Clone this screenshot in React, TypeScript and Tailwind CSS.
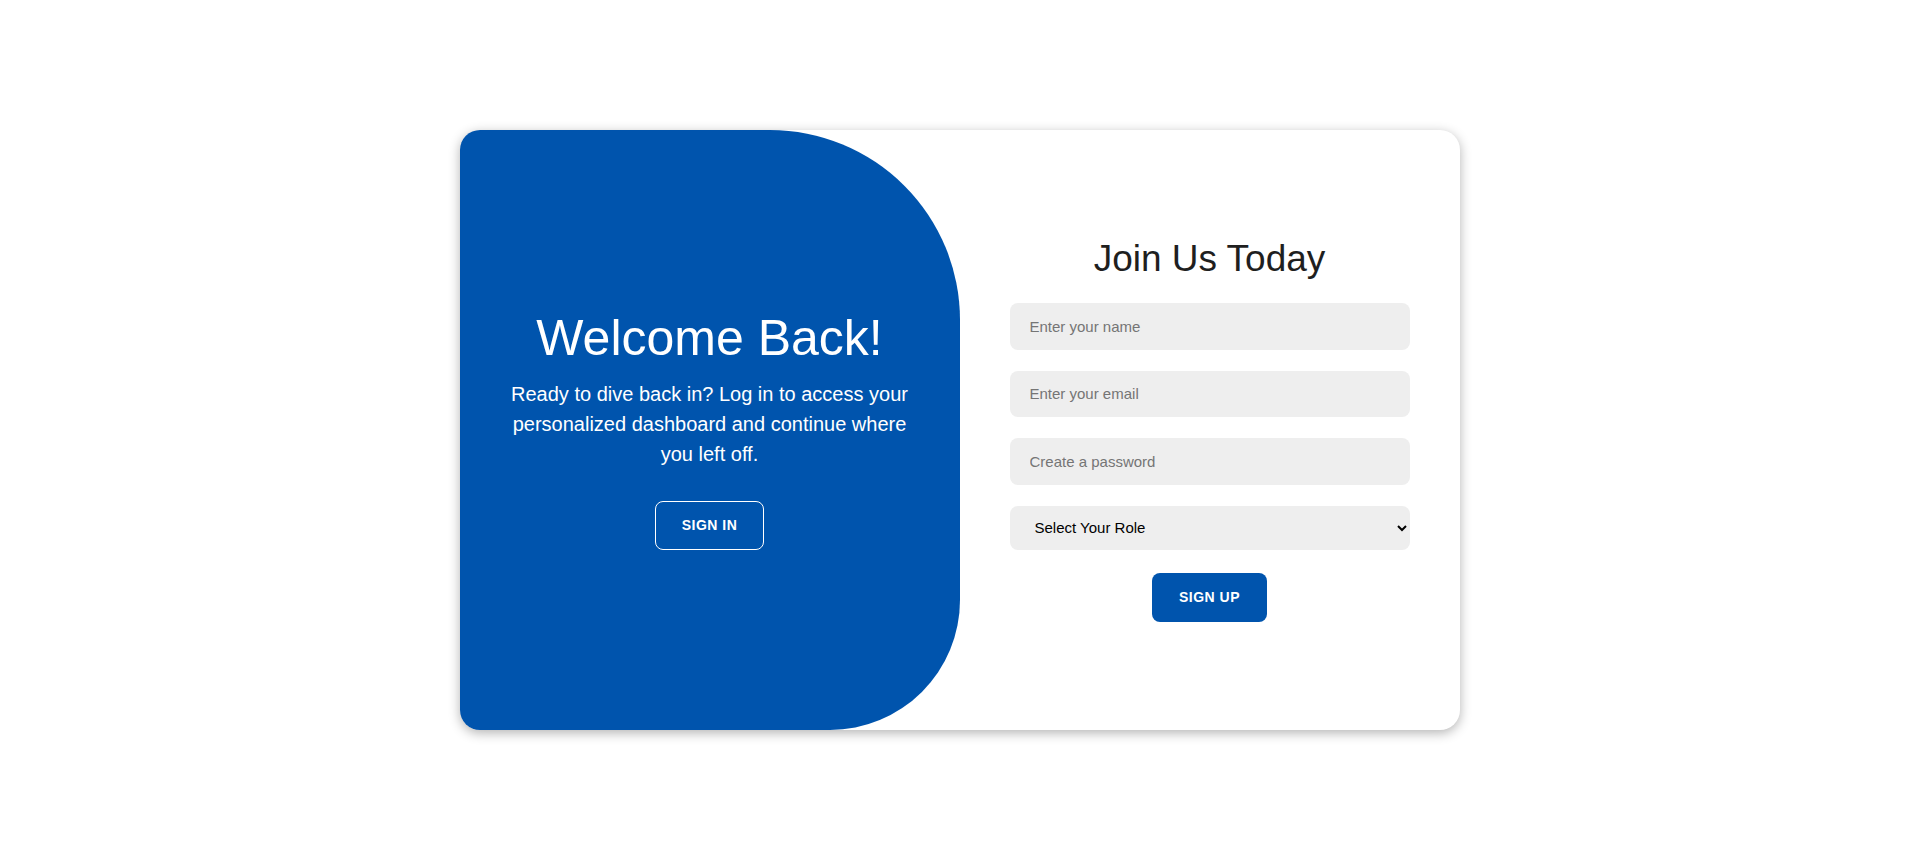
import React from 'react';

export default function App() {
  return (
    <div className="w-full h-[858px] pt-[2px] bg-white flex items-center justify-center font-['Liberation_Sans',Arial,sans-serif]">
      <div className="w-[1000px] h-[600px] bg-white rounded-[20px] overflow-hidden shadow-[0_3px_12px_rgba(0,0,0,0.3)] flex">
        {/* Left blue panel */}
        <div className="w-[500px] h-full bg-[#0054ad] rounded-tr-[190px] rounded-br-[130px] flex flex-col items-center justify-center px-[40px] text-white text-center">
          <h1 className="text-[50px] leading-[1.15] font-normal">Welcome Back!</h1>
          <p className="mt-[11px] text-[20px] leading-[30px]">
            Ready to dive back in? Log in to access your personalized dashboard and continue where you left off.
          </p>
          <button className="mt-[32px] border border-white rounded-[8px] px-[26px] py-[15.5px] text-[14px] leading-[16px] font-bold tracking-[0.5px] uppercase text-white">
            Sign In
          </button>
        </div>

        {/* Right form */}
        <div className="flex-1 h-full flex flex-col items-center justify-center px-[50px]">
          <h2 className="text-[37px] leading-[1.15] font-normal text-[#1f1f1f] mb-[22px]">Join Us Today</h2>
          <input
            type="text"
            placeholder="Enter your name"
            className="w-full h-[46.5px] bg-[#eeeeee] rounded-[8px] px-[20px] text-[15px] outline-none placeholder:text-[#757575]"
          />
          <input
            type="email"
            placeholder="Enter your email"
            className="mt-[21px] w-full h-[46.5px] bg-[#eeeeee] rounded-[8px] px-[20px] text-[15px] outline-none placeholder:text-[#757575]"
          />
          <input
            type="password"
            placeholder="Create a password"
            className="mt-[21px] w-full h-[46.5px] bg-[#eeeeee] rounded-[8px] px-[20px] text-[15px] outline-none placeholder:text-[#757575]"
          />
          <select
            defaultValue=""
            className="mt-[21px] w-full h-[44px] bg-[#eeeeee] rounded-[8px] pl-[21px] pr-[6px] text-[15px] text-black outline-none"
          >
            <option value="" disabled>
              Select Your Role
            </option>
            <option value="student">Student</option>
            <option value="teacher">Teacher</option>
          </select>
          <button className="mt-[23px] bg-[#0054ad] border border-transparent rounded-[8px] px-[26px] py-[15.5px] text-[14px] leading-[16px] font-bold tracking-[0.5px] uppercase text-white">
            Sign Up
          </button>
        </div>
      </div>
    </div>
  );
}
